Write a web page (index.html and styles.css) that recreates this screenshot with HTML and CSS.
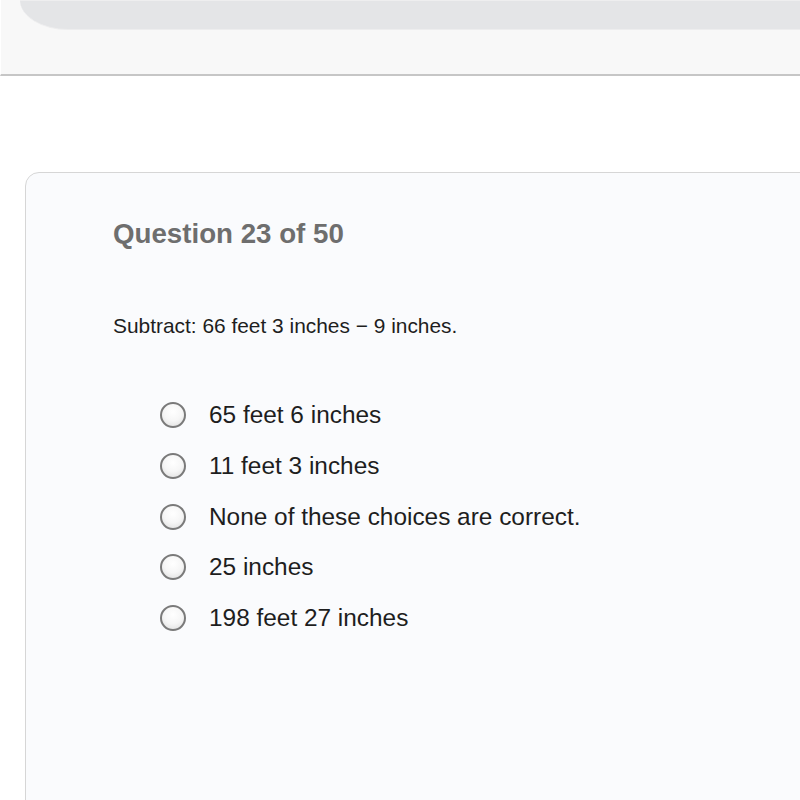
FILE: index.html
```html
<!DOCTYPE html>
<html>
<head>
<meta charset="utf-8">
<link rel="stylesheet" href="styles.css">
</head>
<body>
<div class="header">
  <div class="tabbar"></div>
</div>
<div class="card">
  <h2 class="title">Question 23 of 50</h2>
  <p class="prompt">Subtract: 66 feet 3 inches − 9 inches.</p>
  <ul class="options">
    <li class="option"><span class="radio"></span><span class="label">65 feet 6 inches</span></li>
    <li class="option"><span class="radio"></span><span class="label">11 feet 3 inches</span></li>
    <li class="option"><span class="radio"></span><span class="label">None of these choices are correct.</span></li>
    <li class="option"><span class="radio"></span><span class="label">25 inches</span></li>
    <li class="option"><span class="radio"></span><span class="label">198 feet 27 inches</span></li>
  </ul>
</div>
</body>
</html>
```
FILE: styles.css
```css
html, body {
  margin: 0;
  padding: 0;
  background: #ffffff;
  overflow: hidden;
  width: 800px;
  height: 800px;
  font-family: "Liberation Sans", Arial, sans-serif;
}
.header {
  height: 76px;
  background: #f8f8f8;
  border-bottom: 2px solid #c6c6c6;
  box-sizing: border-box;
  border-left: 1px solid #ffffff;
}
.tabbar {
  height: 30px;
  margin-left: 19px;
  background: #e4e5e7;
  border-top: 1px solid #eeeeef;
  box-sizing: border-box;
  border-bottom: 1px solid #ededee;
  border-bottom-left-radius: 48px 30px;
}
.card {
  margin-top: 96px;
  margin-left: 25px;
  width: 820px;
  min-height: 700px;
  background: #fafbfd;
  border: 1px solid #d6d6d6;
  border-radius: 14px;
  box-sizing: border-box;
  padding: 44px 0 0 87px;
}
.title {
  margin: 0;
  font-size: 27.7px;
  line-height: 33px;
  font-weight: bold;
  color: #6e6e6e;
}
.prompt {
  margin: 64px 0 0 0;
  font-size: 20.9px;
  line-height: 24px;
  color: #1e1e1e;
}
.options {
  list-style: none;
  margin: 52px 0 0 0;
  padding: 0 0 0 47px;
  display: flex;
  flex-direction: column;
}
.option {
  height: 50.7px;
  display: flex;
  align-items: center;
  gap: 23px;
}
.radio {
  width: 26px;
  height: 26px;
  border-radius: 50%;
  box-sizing: border-box;
  border: 2px solid #7a7a7a;
  background: radial-gradient(circle at 50% 35%, #ffffff 0%, #f6f6f6 50%, #dcdcdc 100%);
  flex: none;
}
.label {
  font-size: 24.4px;
  line-height: 28px;
  color: #1e1e1e;
}
```
